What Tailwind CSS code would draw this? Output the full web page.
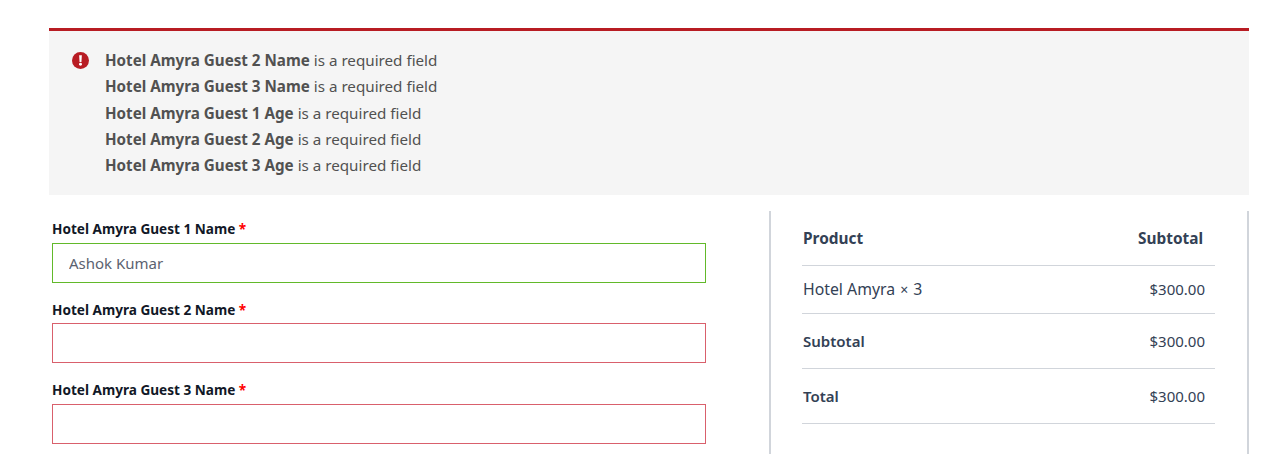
<!DOCTYPE html>
<html lang="en">
<head>
  <meta charset="UTF-8" />
  <meta name="viewport" content="width=device-width, initial-scale=1" />
  <title>Checkout</title>
  <script src="https://cdn.jsdelivr.net/npm/@tailwindcss/browser@4"></script>
</head>
<body class="bg-white h-[454px] overflow-hidden font-['Noto_Sans',sans-serif]">
  <div class="pt-7 pl-[49px] pr-[22px]">
    <!-- error notice -->
    <div class="flex h-[167px] border-t-[3px] border-[#b81c23] bg-[#f5f5f5] pt-[16.2px] pl-[23px] text-[15.2px] leading-[26.2px] text-[#515151]">
      <svg class="mt-[4.8px] w-[17px] h-[17px] shrink-0" viewBox="0 0 16 16">
        <circle cx="8" cy="8" r="8" fill="#b81c23" />
        <path d="M6.7 3h2.6l-.4 6.3H7.1z" fill="#fff" />
        <circle cx="8" cy="11.6" r="1.4" fill="#fff" />
      </svg>
      <ul class="ml-4">
        <li><strong class="font-bold">Hotel Amyra Guest 2 Name</strong> is a required field</li>
        <li><strong class="font-bold">Hotel Amyra Guest 3 Name</strong> is a required field</li>
        <li><strong class="font-bold">Hotel Amyra Guest 1 Age</strong> is a required field</li>
        <li><strong class="font-bold">Hotel Amyra Guest 2 Age</strong> is a required field</li>
        <li><strong class="font-bold">Hotel Amyra Guest 3 Age</strong> is a required field</li>
      </ul>
    </div>

    <div class="flex mt-4">
      <!-- guest fields -->
      <form class="w-[657px] ml-[3px] pt-[8px] shrink-0">
        <label class="block text-[13.6px] leading-5 font-bold text-[#111827]">Hotel Amyra Guest 1 Name <span class="text-[#ff0000]">*</span></label>
        <input class="block w-[654px] h-10 mt-1 px-4 border border-[#62b92a] text-[15px] text-[#5b6270] outline-none" value="Ashok Kumar" />
        <label class="block mt-[17px] text-[13.6px] leading-5 font-bold text-[#111827]">Hotel Amyra Guest 2 Name <span class="text-[#ff0000]">*</span></label>
        <input class="block w-[654px] h-10 mt-[3px] px-4 border border-[#d9606c] outline-none" />
        <label class="block mt-[17px] text-[13.6px] leading-5 font-bold text-[#111827]">Hotel Amyra Guest 3 Name <span class="text-[#ff0000]">*</span></label>
        <input class="block w-[654px] h-10 mt-1 px-4 border border-[#d9606c] outline-none" />
      </form>

      <!-- order summary -->
      <div class="ml-[60px] w-[480px] h-[260px] border-x-2 border-[#d1d5db] pl-[31px] pr-[32px] text-[15px] text-[#334155]">
        <div class="flex justify-between h-[55px] pt-[16px] pr-3 border-b border-[#d1d5db] font-bold text-[15.4px]">
          <span class="pl-px">Product</span><span>Subtotal</span>
        </div>
        <div class="flex justify-between h-[48px] items-center pr-[10px] border-b border-[#d1d5db]">
          <span class="pl-px text-[15.8px]">Hotel Amyra <span class="mx-px text-[14px]">×</span> 3</span><span>$300.00</span>
        </div>
        <div class="flex justify-between h-[55px] items-center pr-[10px] border-b border-[#d1d5db]">
          <span class="pl-px font-semibold">Subtotal</span><span>$300.00</span>
        </div>
        <div class="flex justify-between h-[55px] items-center pr-[10px] border-b border-[#d1d5db]">
          <span class="pl-px font-semibold">Total</span><span>$300.00</span>
        </div>
      </div>
    </div>
  </div>
</body>
</html>
